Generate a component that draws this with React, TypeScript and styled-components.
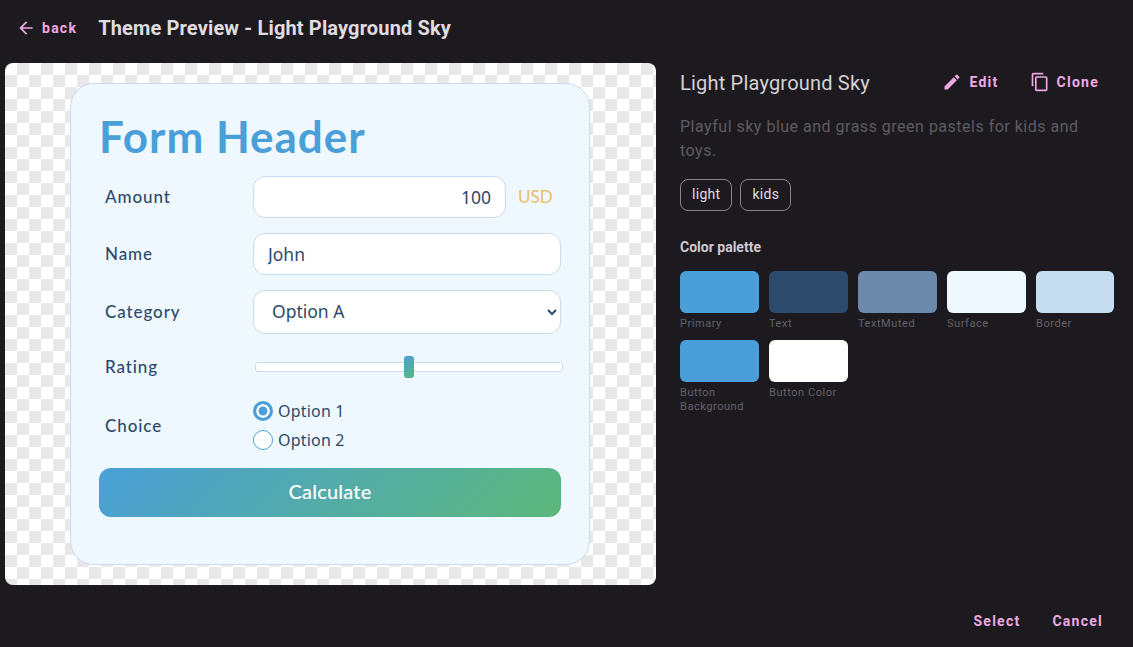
import React from "react";
import styled, { createGlobalStyle } from "styled-components";

const Global = createGlobalStyle`
  html, body { margin: 0; padding: 0; background: #1c1a1e; }
  body { font-family: Roboto, "Liberation Sans", sans-serif; }
  * { box-sizing: border-box; }
`;

const Page = styled.div`
  width: 1133px;
  height: 647px;
  background: #1c1a1e;
  color: #e0dce0;
  display: flex;
  flex-direction: column;
  overflow: hidden;
`;
const TopBar = styled.header`
  height: 63px;
  display: flex;
  align-items: center;
  padding: 0 0 7px 10px;
`;
const TextButton = styled.button<{ $gap?: number; $inset?: number }>`
  display: inline-flex;
  align-items: center;
  gap: ${(p) => p.$gap ?? 8}px;
  border: 0;
  background: none;
  padding: 0 8px 0 ${(p) => p.$inset ?? 8}px;
  height: 36px;
  color: #efa8e4;
  font: 700 14px/20px Roboto, sans-serif;
  letter-spacing: 1.25px;
`;
const Title = styled.h1`
  margin: 0 0 0 13px;
  font: 700 20px/28px Roboto, sans-serif;
  letter-spacing: 0.15px;
  color: #e0dce0;
`;
const Body = styled.main`
  flex: 1;
  display: flex;
  align-items: flex-start;
  padding-left: 5px;
`;
const Preview = styled.section`
  flex: none;
  width: 651px;
  height: 522px;
  padding: 20px 66px 20px 65px;
  border-radius: 8px;
  background-color: #fff;
  background-image: conic-gradient(#e8e8e8 25%, #fff 0 50%, #e8e8e8 0 75%, #fff 0);
  background-size: 24px 24px;
`;
const Card = styled.form`
  height: 482px;
  padding: 22px 28px 0;
  border: 1px solid #c6dcf0;
  border-radius: 24px;
  background: #f0f8ff;
  color: #2c4a6b;
  font-family: "Noto Sans", sans-serif;
`;
const FormTitle = styled.h2`
  margin: 0 0 10px 0;
  font: 700 44px/60px Lato, sans-serif;
  letter-spacing: 0.95px;
  color: #4a9fd8;
`;
const Row = styled.div<{ $mb: number }>`
  display: grid;
  grid-template-columns: 154px 1fr;
  align-items: center;
  margin-bottom: ${(p) => p.$mb}px;
`;
const Label = styled.label`
  padding-left: 6px;
  font: 500 17px/24px Lato, sans-serif;
  letter-spacing: 0.9px;
  color: #2c4a6b;
`;
const InputLine = styled.div`
  display: flex;
  align-items: center;
  gap: 12px;
`;
const Input = styled.input<{ $right?: boolean }>`
  width: 100%;
  min-width: 0;
  height: 42px;
  padding: 0 14px;
  border: 1px solid #c6dcf0;
  border-radius: 12px;
  background: #fff;
  color: #2c4a6b;
  font: 400 17.5px "Noto Sans", sans-serif;
  text-align: ${(p) => (p.$right ? "right" : "left")};
`;
const Unit = styled.span`
  flex: none;
  width: 43px;
  font: 400 17px/24px Lato, sans-serif;
  color: #e8bf66;
`;
const Select = styled.select`
  width: 100%;
  height: 44px;
  padding: 0 14px 2px;
  border: 1px solid #c6dcf0;
  border-radius: 12px;
  background: #fff;
  color: #2c4a6b;
  font: 400 17.5px "Noto Sans", sans-serif;
`;
const Track = styled.div`
  position: relative;
  height: 10px;
  margin: 0 -2px 0 2px;
  border: 1px solid #c6dcf0;
  border-radius: 3px;
  background: #fff;
`;
const Thumb = styled.div`
  position: absolute;
  left: 148px;
  top: -7px;
  width: 10px;
  height: 22px;
  border-radius: 3px;
  background: linear-gradient(135deg, #4a9fd8, #5cb87a);
`;
const Radios = styled.div`
  display: flex;
  flex-direction: column;
  gap: 9px;
`;
const RadioLine = styled.label`
  display: flex;
  align-items: center;
  gap: 5px;
  height: 20px;
  font: 400 16px/20px "Noto Sans", sans-serif;
  letter-spacing: 0.2px;
  color: #2c4a6b;
`;
const RadioDot = styled.span<{ $on?: boolean }>`
  width: 20px;
  height: 20px;
  border-radius: 50%;
  background: ${(p) => (p.$on ? "#4a9fd8" : "#fff")};
  border: ${(p) => (p.$on ? "3px solid #4a9fd8" : "1.5px solid #4a9fd8")};
  box-shadow: ${(p) => (p.$on ? "inset 0 0 0 2.5px #fff" : "none")};
`;
const Submit = styled.button`
  width: 100%;
  height: 49px;
  padding: 0 0 3px;
  border: 0;
  border-radius: 12px;
  background: linear-gradient(135deg, #4a9fd8, #5cb87a);
  color: #fff;
  font: 500 20px/24px Lato, sans-serif;
  letter-spacing: 0.2px;
`;
const Side = styled.aside`
  flex: 1;
  padding: 0 19px 0 24px;
`;
const SideHead = styled.div`
  display: flex;
  align-items: center;
  justify-content: space-between;
  height: 40px;
`;
const SideName = styled.h3`
  margin: 0;
  font: 400 20px/28px Roboto, sans-serif;
  letter-spacing: 0.2px;
  color: #d8d0d6;
`;
const SideActions = styled.div`
  display: flex;
  gap: 15px;
  margin: -2px 7px 0 0;
`;
const Description = styled.p`
  margin: 12px 0 0;
  font: 400 16px/24px Roboto, sans-serif;
  letter-spacing: 0.5px;
  color: #5f5b62;
`;
const Tags = styled.div`
  display: flex;
  gap: 8px;
  margin-top: 16px;
`;
const Tag = styled.span`
  height: 32px;
  padding: 0 11px 2px;
  display: flex;
  align-items: center;
  border: 1px solid #89858c;
  border-radius: 8px;
  font: 400 14px/20px Roboto, sans-serif;
  letter-spacing: 0.3px;
  color: #e0dce0;
`;
const PaletteTitle = styled.h4`
  margin: 26px 0 14px;
  font: 700 14px/20px Roboto, sans-serif;
  color: #d3c8d0;
`;
const Swatches = styled.div`
  display: grid;
  grid-template-columns: repeat(4, 79px) 78px;
  column-gap: 10px;
  row-gap: 9px;
`;
const Swatch = styled.div`
  display: flex;
  flex-direction: column;
`;
const Chip = styled.div<{ $color: string }>`
  height: 42px;
  border-radius: 6px;
  background: ${(p) => p.$color};
`;
const ChipName = styled.span`
  margin-top: 4px;
  font: 400 11px/14px Roboto, sans-serif;
  letter-spacing: 0.55px;
  color: #65616a;
`;
const Footer = styled.footer`
  height: 62px;
  display: flex;
  justify-content: flex-end;
  align-items: flex-start;
  gap: 16px;
  padding: 18px 22px 0 0;
`;

const Back = () => (
  <svg width="20" height="20" viewBox="0 0 24 24" fill="currentColor">
    <path d="M20 11H7.83l5.59-5.59L12 4l-8 8 8 8 1.41-1.41L7.83 13H20v-2z" />
  </svg>
);
const Pencil = () => (
  <svg width="20" height="20" viewBox="0 0 24 24" fill="currentColor">
    <path d="M3 17.25V21h3.75L17.81 9.94l-3.75-3.75L3 17.25zM20.71 7.04a1 1 0 0 0 0-1.41l-2.34-2.34a1 1 0 0 0-1.41 0l-1.83 1.83 3.75 3.75 1.83-1.83z" />
  </svg>
);
const Copy = () => (
  <svg width="20" height="20" viewBox="0 0 24 24" fill="currentColor">
    <path d="M16 1H4c-1.1 0-2 .9-2 2v14h2V3h12V1zm3 4H8c-1.1 0-2 .9-2 2v14c0 1.1.9 2 2 2h11c1.1 0 2-.9 2-2V7c0-1.1-.9-2-2-2zm0 16H8V7h11v14z" />
  </svg>
);

const palette: [string, string][] = [
  ["Primary", "#4a9fd8"],
  ["Text", "#2c4a6b"],
  ["TextMuted", "#6b8aab"],
  ["Surface", "#f0f8ff"],
  ["Border", "#c6dcf0"],
  ["Button Background", "#4a9fd8"],
  ["Button Color", "#ffffff"],
];

export default function App() {
  return (
    <Page>
      <Global />
      <TopBar>
        <TextButton $gap={6} $inset={6}>
          <Back />
          back
        </TextButton>
        <Title>Theme Preview - Light Playground Sky</Title>
      </TopBar>
      <Body>
        <Preview>
          <Card onSubmit={(e) => e.preventDefault()}>
            <FormTitle>Form Header</FormTitle>
            <Row $mb={15}>
              <Label>Amount</Label>
              <InputLine>
                <Input $right defaultValue="100" />
                <Unit>USD</Unit>
              </InputLine>
            </Row>
            <Row $mb={15}>
              <Label>Name</Label>
              <Input defaultValue="John" />
            </Row>
            <Row $mb={21}>
              <Label>Category</Label>
              <Select defaultValue="Option A">
                <option>Option A</option>
                <option>Option B</option>
              </Select>
            </Row>
            <Row $mb={22}>
              <Label>Rating</Label>
              <Track>
                <Thumb />
              </Track>
            </Row>
            <Row $mb={18}>
              <Label>Choice</Label>
              <Radios>
                <RadioLine>
                  <RadioDot $on />
                  Option 1
                </RadioLine>
                <RadioLine>
                  <RadioDot />
                  Option 2
                </RadioLine>
              </Radios>
            </Row>
            <Submit type="button">Calculate</Submit>
          </Card>
        </Preview>
        <Side>
          <SideHead>
            <SideName>Light Playground Sky</SideName>
            <SideActions>
              <TextButton $gap={7}>
                <Pencil />
                Edit
              </TextButton>
              <TextButton $gap={7}>
                <Copy />
                Clone
              </TextButton>
            </SideActions>
          </SideHead>
          <Description>Playful sky blue and grass green pastels for kids and toys.</Description>
          <Tags>
            <Tag>light</Tag>
            <Tag>kids</Tag>
          </Tags>
          <PaletteTitle>Color palette</PaletteTitle>
          <Swatches>
            {palette.map(([name, color]) => (
              <Swatch key={name}>
                <Chip $color={color} />
                <ChipName>{name}</ChipName>
              </Swatch>
            ))}
          </Swatches>
        </Side>
      </Body>
      <Footer>
        <TextButton>Select</TextButton>
        <TextButton>Cancel</TextButton>
      </Footer>
    </Page>
  );
}
